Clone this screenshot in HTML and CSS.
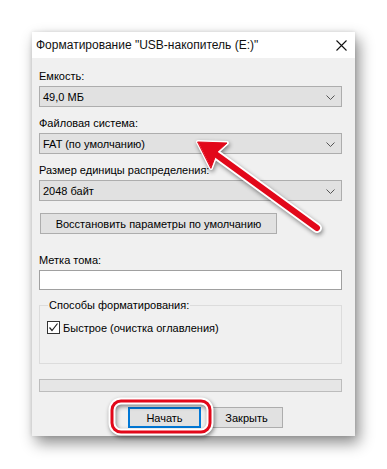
FILE: index.html
```html
<!DOCTYPE html>
<html lang="ru">
<head>
    <meta charset="UTF-8">
    <meta name="viewport" content="width=device-width, initial-scale=1.0">
    <title>Форматирование</title>
    <link rel="stylesheet" href="styles.css">
</head>
<body>
    <!-- Окно форматирования -->
    <div class="window">
        <div class="titlebar">
            <span class="title">Форматирование "USB-накопитель (E:)"</span>
            <svg class="close" width="11" height="11" viewBox="0 0 11 11">
                <path d="M0.5 0.5 L10.5 10.5 M10.5 0.5 L0.5 10.5" stroke="#111" stroke-width="1.1" fill="none"/>
            </svg>
        </div>

        <div class="content">
            <div class="label">Емкость:</div>
            <div class="combo">
                <span>49,0 МБ</span>
                <svg class="chevron" width="9" height="5" viewBox="0 0 9 5"><path d="M0.5 0.5 L4.5 4.5 L8.5 0.5" stroke="#555" fill="none"/></svg>
            </div>

            <div class="label">Файловая система:</div>
            <div class="combo">
                <span>FAT (по умолчанию)</span>
                <svg class="chevron" width="9" height="5" viewBox="0 0 9 5"><path d="M0.5 0.5 L4.5 4.5 L8.5 0.5" stroke="#555" fill="none"/></svg>
            </div>

            <div class="label">Размер единицы распределения:</div>
            <div class="combo">
                <span>2048 байт</span>
                <svg class="chevron" width="9" height="5" viewBox="0 0 9 5"><path d="M0.5 0.5 L4.5 4.5 L8.5 0.5" stroke="#555" fill="none"/></svg>
            </div>

            <div class="btn btn-restore">Восстановить параметры по умолчанию</div>

            <div class="label label-volume">Метка тома:</div>
            <div class="textbox"></div>

            <fieldset class="group">
                <legend>Способы форматирования:</legend>
                <div class="check-row">
                    <span class="checkbox">
                        <svg width="11" height="11" viewBox="0 0 11 11"><path d="M1.5 5.5 L4 8.5 L9.5 1.5" stroke="#222" stroke-width="1.2" fill="none"/></svg>
                    </span>
                    <span>Быстрое (очистка оглавления)</span>
                </div>
            </fieldset>

            <div class="progressbar"></div>

            <div class="actions">
                <div class="btn btn-default">Начать</div>
                <div class="btn">Закрыть</div>
            </div>
        </div>
    </div>

    <!-- Пометки поверх скриншота -->
    <svg class="marks" width="387" height="469" viewBox="0 0 387 469">
        <g class="mark-shadow">
            <g stroke="#fff" stroke-linejoin="round" stroke-linecap="round">
                <line x1="317" y1="228" x2="214" y2="153" stroke-width="10"/>
                <polygon points="198,142 227,143 217,152 211,168" stroke-width="4" fill="#fff"/>
                <rect x="112" y="401" width="98" height="31" rx="9" fill="none" stroke-width="7"/>
            </g>
            <g stroke="#e2081a" stroke-linejoin="round" stroke-linecap="round">
                <line x1="317" y1="228" x2="214" y2="153" stroke-width="6"/>
                <polygon points="198,142 227,143 217,152 211,168" stroke-width="1" fill="#e2081a"/>
                <rect x="112" y="401" width="98" height="31" rx="9" fill="none" stroke-width="3"/>
            </g>
        </g>
    </svg>
</body>
</html>
```

FILE: styles.css
```css
* {
    margin: 0;
    padding: 0;
    box-sizing: border-box;
}

body {
    background: #fff;
    font-family: "Liberation Sans", Arial, sans-serif;
    font-size: 11px;
    color: #000;
    width: 387px;
    height: 469px;
    overflow: hidden;
    padding: 32px 0 0 32px;
}

/* Окно */
.window {
    width: 323px;
    height: 404px;
    background: #f0f0f0;
    box-shadow: 4px 7px 14px rgba(0, 0, 0, 0.45), 0 0 4px rgba(0, 0, 0, 0.12);
    display: flex;
    flex-direction: column;
}

.titlebar {
    height: 26px;
    background: #fff;
    display: flex;
    align-items: center;
    justify-content: space-between;
    padding: 0 8px 0 4px;
}

.title {
    font-size: 12px;
    color: #111;
}

.content {
    padding: 11px 13px 0 7px;
    display: flex;
    flex-direction: column;
}

.label {
    height: 15px;
    line-height: 15px;
    margin-bottom: 2px;
}

.combo {
    height: 21px;
    background: #e1e1e1;
    border: 1px solid #adadad;
    display: flex;
    align-items: center;
    justify-content: space-between;
    padding: 0 6px 0 3px;
    margin-bottom: 9px;
}

.chevron {
    margin-top: 1px;
}

.btn {
    height: 21px;
    background: #e1e1e1;
    border: 1px solid #adadad;
    display: flex;
    align-items: center;
    justify-content: center;
    width: 73px;
}

.btn-restore {
    width: 237px;
    margin: 3px 0 0 1px;
}

.label-volume {
    margin-top: 19px;
}

.textbox {
    height: 20px;
    background: #fff;
    border: 1px solid #a0a0a0;
}

.group {
    margin-top: 8px;
    border: 1px solid #dcdcdc;
    height: 66px;
    padding: 0 7px;
}

.group legend {
    margin-left: 1px;
    padding: 0 1px;
    line-height: 15px;
}

.check-row {
    margin-top: 8px;
    display: flex;
    align-items: center;
    gap: 3px;
}

.checkbox {
    width: 13px;
    height: 13px;
    border: 1px solid #333;
    background: #fff;
    display: flex;
    align-items: center;
    justify-content: center;
}

.progressbar {
    margin-top: 15px;
    height: 13px;
    background: #e6e6e6;
    border: 1px solid #bcbcbc;
}

.actions {
    display: flex;
    gap: 9px;
    margin: 15px 0 0 89px;
}

.btn-default {
    border: 2px solid #0078d7;
    width: 73px;
}

/* Пометки */
.marks {
    position: absolute;
    top: 0;
    left: 0;
    pointer-events: none;
}

.mark-shadow {
    filter: drop-shadow(1px 2px 2px rgba(0, 0, 0, 0.45));
}
```
